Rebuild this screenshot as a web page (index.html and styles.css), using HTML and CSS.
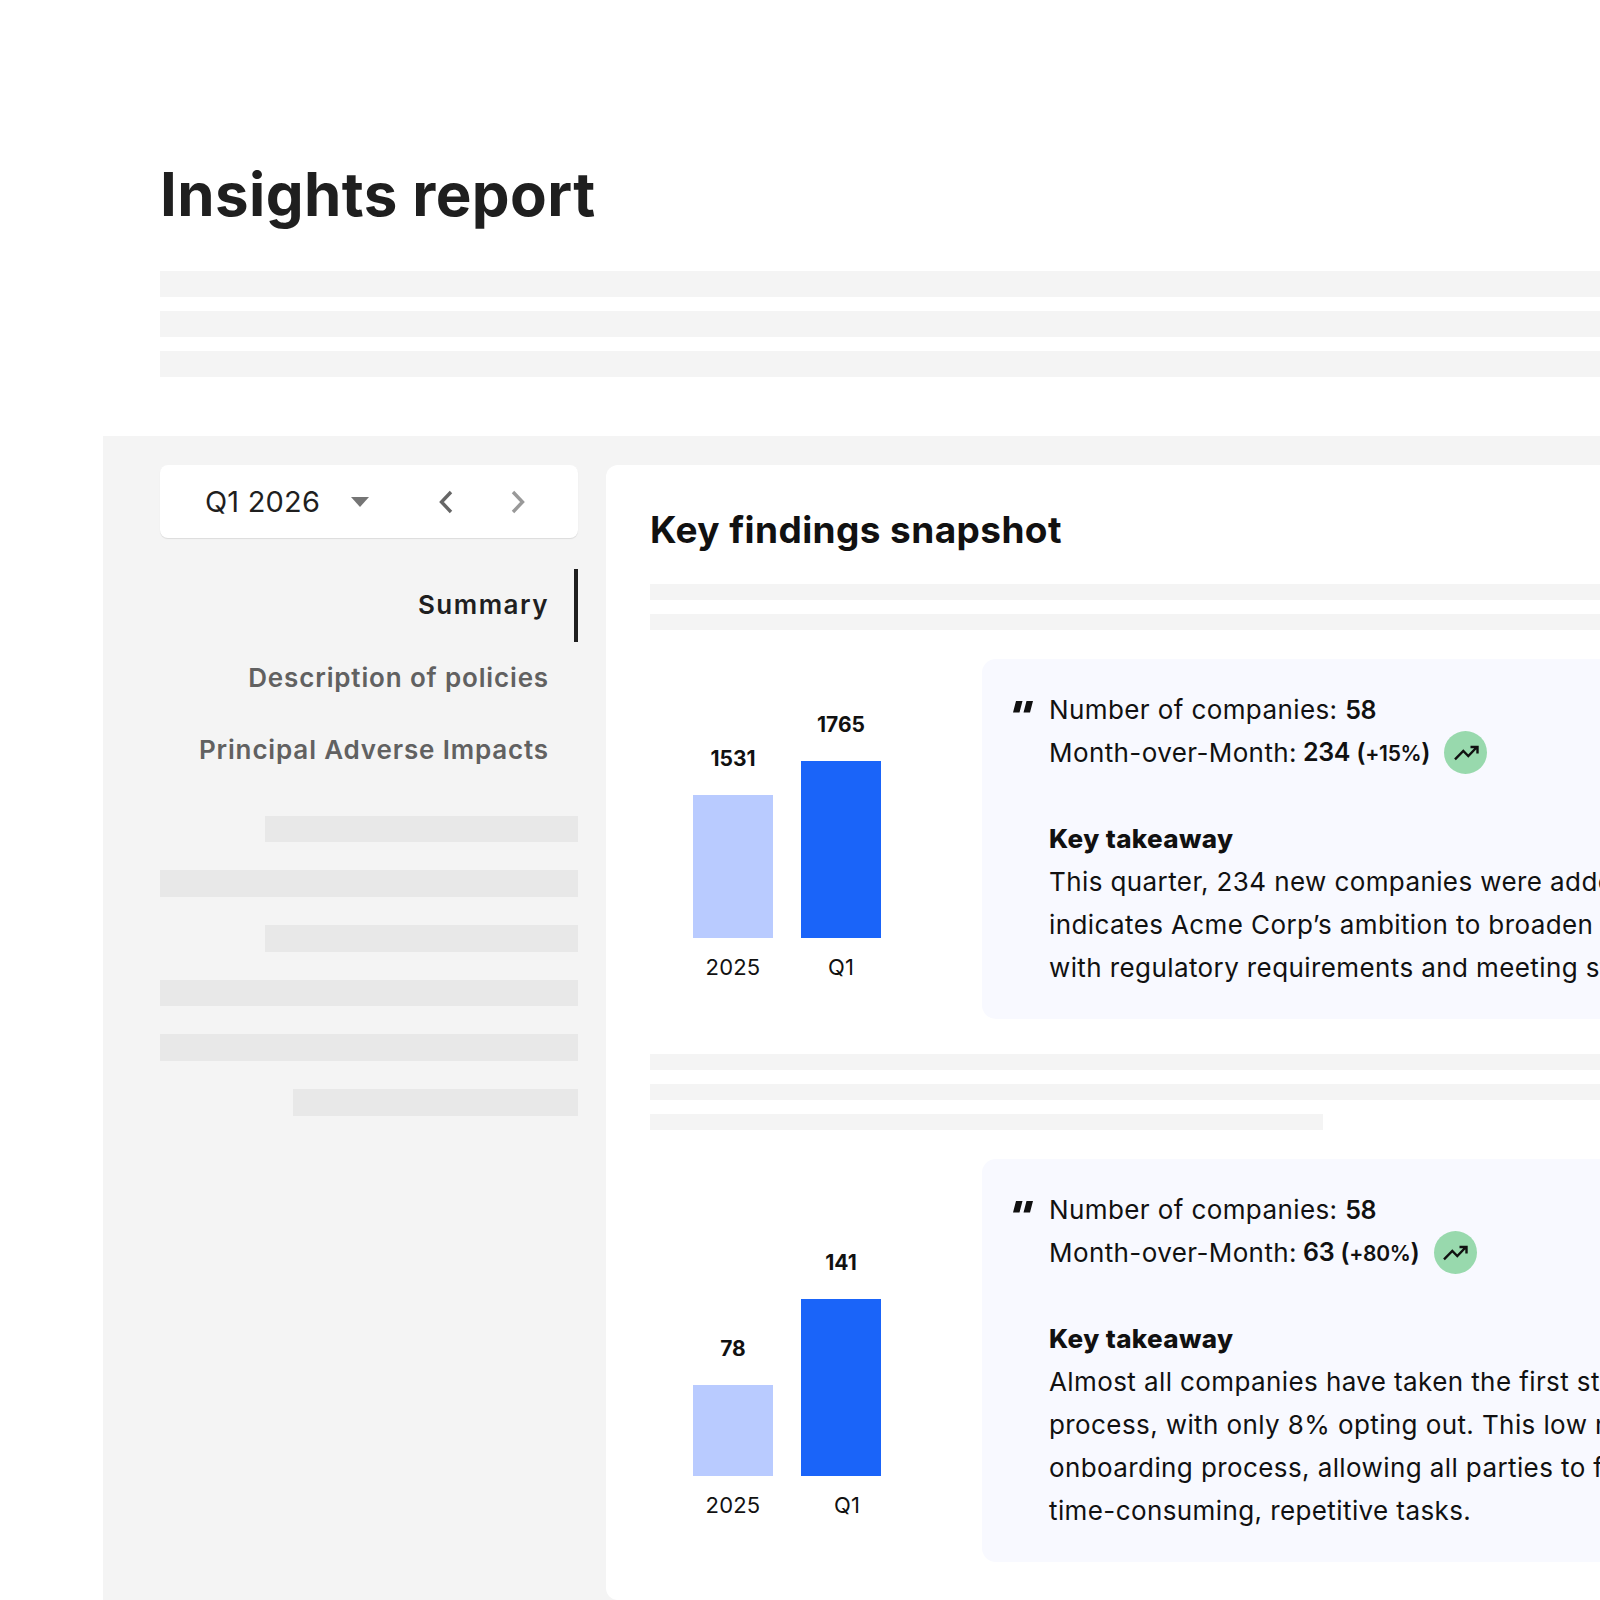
FILE: index.html
```html
<!DOCTYPE html>
<html lang="en">
<head>
    <meta charset="UTF-8">
    <meta name="viewport" content="width=device-width, initial-scale=1.0">
    <title>Insights report</title>
    <link rel="stylesheet" href="styles.css">
</head>
<body>
    <header class="report-header">
        <h1>Insights report</h1>
        <div class="line-stack">
            <div class="line"></div>
            <div class="line"></div>
            <div class="line"></div>
        </div>
    </header>

    <div class="workspace">
        <aside class="sidebar">
            <div class="period-picker">
                <span class="period-label">Q1 2026</span>
                <svg class="caret" width="18" height="10" viewBox="0 0 18 10"><path d="M0 0h18l-9 10z" fill="#757575"/></svg>
                <svg class="chevron chevron-prev" width="16" height="24" viewBox="0 0 16 24"><path d="M13 2 3.500 12l9.500 10" fill="none" stroke="#666" stroke-width="3.400"/></svg>
                <svg class="chevron chevron-next" width="16" height="24" viewBox="0 0 16 24"><path d="m3 2 9.500 10L3 22" fill="none" stroke="#999" stroke-width="3.400"/></svg>
            </div>
            <nav class="side-nav">
                <a class="side-link active">Summary</a>
                <a class="side-link">Description of policies</a>
                <a class="side-link">Principal Adverse Impacts</a>
            </nav>
            <div class="side-lines">
                <div class="side-line short"></div>
                <div class="side-line"></div>
                <div class="side-line short"></div>
                <div class="side-line"></div>
                <div class="side-line"></div>
                <div class="side-line shorter"></div>
            </div>
        </aside>

        <main class="main-card">
            <h2>Key findings snapshot</h2>
            <div class="thin-lines">
                <div class="thin-line"></div>
                <div class="thin-line"></div>
            </div>

            <section class="finding">
                <div class="chart">
                    <div class="bar-col">
                        <span class="bar-value">1531</span>
                        <div class="bar bar-light" style="height: 143px"></div>
                        <span class="bar-label">2025</span>
                    </div>
                    <div class="bar-col">
                        <span class="bar-value">1765</span>
                        <div class="bar bar-dark" style="height: 177px"></div>
                        <span class="bar-label">Q1</span>
                    </div>
                </div>
                <div class="quote-card">
                    <svg class="quote-mark" width="20" height="12" viewBox="0 0 20 12"><path d="M3 0h6.500L6.500 11.500H0zM13.500 0H20l-3 11.500h-6.500z" fill="#111"/></svg>
                    <p>Number of companies: <b>58</b></p>
                    <p class="trend-row">Month-over-Month: <b>234 (<small>+15%</small>)</b>
                        <span class="trend-badge">
                            <svg width="28" height="18" viewBox="0 0 28 18"><path d="M3 15.300 11.300 7l5 5L24 4M18.500 3h7v6.500" fill="none" stroke="#111" stroke-width="2.400"/></svg>
                        </span>
                    </p>
                    <h3>Key takeaway</h3>
                    <p>This quarter, 234 new companies were added to the portfolio, which</p>
                    <p>indicates Acme Corp’s ambition to broaden its reach in line</p>
                    <p>with regulatory requirements and meeting stakeholder needs.</p>
                </div>
            </section>

            <div class="thin-lines mid-lines">
                <div class="thin-line"></div>
                <div class="thin-line"></div>
                <div class="thin-line part"></div>
            </div>

            <section class="finding finding-tall">
                <div class="chart">
                    <div class="bar-col">
                        <span class="bar-value">78</span>
                        <div class="bar bar-light" style="height: 91px"></div>
                        <span class="bar-label">2025</span>
                    </div>
                    <div class="bar-col">
                        <span class="bar-value">141</span>
                        <div class="bar bar-dark" style="height: 177px"></div>
                        <span class="bar-label q1-shift">Q1</span>
                    </div>
                </div>
                <div class="quote-card">
                    <svg class="quote-mark" width="20" height="12" viewBox="0 0 20 12"><path d="M3 0h6.500L6.500 11.500H0zM13.500 0H20l-3 11.500h-6.500z" fill="#111"/></svg>
                    <p>Number of companies: <b>58</b></p>
                    <p class="trend-row">Month-over-Month: <b>63 (<small>+80%</small>)</b>
                        <span class="trend-badge">
                            <svg width="28" height="18" viewBox="0 0 28 18"><path d="M3 15.300 11.300 7l5 5L24 4M18.500 3h7v6.500" fill="none" stroke="#111" stroke-width="2.400"/></svg>
                        </span>
                    </p>
                    <h3>Key takeaway</h3>
                    <p>Almost all companies have taken the first step in the onboarding</p>
                    <p>process, with only 8% opting out. This low non-participation</p>
                    <p>onboarding process, allowing all parties to focus less on</p>
                    <p>time-consuming, repetitive tasks.</p>
                </div>
            </section>
        </main>
    </div>
</body>
</html>
```

FILE: styles.css
```css
html, body {
    margin: 0;
    padding: 0;
    height: 1600px;
    overflow: hidden;
    background-color: #fff;
}
body {
    font-family: Inter, "Noto Sans", sans-serif;
    color: #111;
}
.report-header {
    padding: 158px 0 0 160px;
}
.report-header h1 {
    margin: 0;
    height: 113px;
    font-size: 60px;
    line-height: 73px;
    letter-spacing: 0.4px;
    font-weight: 700;
    color: #1f1f1f;
}
.line-stack {
    display: flex;
    flex-direction: column;
    gap: 14px;
}
.line {
    height: 26px;
    background-color: #f4f4f4;
}
.workspace {
    display: flex;
    gap: 28px;
    margin: 59px 0 0 103px;
    padding: 29px 0 0 57px;
    height: 1135px;
    background-color: #f4f4f4;
}
.sidebar {
    flex: 0 0 418px;
}
.period-picker {
    display: flex;
    align-items: center;
    height: 73px;
    padding-left: 45px;
    box-sizing: border-box;
    background-color: #fff;
    border-radius: 8px;
    box-shadow: 0 1px 1px rgba(0, 0, 0, 0.1);
}
.period-label {
    width: 146px;
    font-size: 29px;
    letter-spacing: 0.2px;
    color: #1f1f1f;
}
.caret {
    margin-right: 69px;
}
.chevron-prev {
    margin-right: 56px;
}
.side-nav {
    display: flex;
    flex-direction: column;
    margin-top: 31px;
    text-align: right;
}
.side-link {
    height: 72.5px;
    line-height: 72.5px;
    padding-right: 29px;
    font-size: 26px;
    letter-spacing: 0.85px;
    font-weight: 600;
    color: #616161;
}
.side-link.active {
    color: #1f1f1f;
    letter-spacing: 1.5px;
    border-right: 4px solid #1f1f1f;
    padding-right: 25px;
}
.side-lines {
    display: flex;
    flex-direction: column;
    align-items: flex-end;
    gap: 28px;
    margin-top: 29px;
}
.side-line {
    width: 100%;
    height: 26.7px;
    background-color: #e8e8e8;
}
.side-line.short {
    width: 313px;
}
.side-line.shorter {
    width: 285px;
}
.main-card {
    flex: 0 0 1100px;
    box-sizing: border-box;
    padding: 0 0 0 44px;
    background-color: #fff;
    border-radius: 12px;
}
.main-card h2 {
    margin: 0;
    padding-top: 41px;
    height: 119px;
    box-sizing: border-box;
    font-size: 37px;
    line-height: 48px;
    letter-spacing: 0.4px;
    font-weight: 700;
}
.thin-lines {
    display: flex;
    flex-direction: column;
    gap: 14px;
}
.thin-line {
    height: 16px;
    background-color: #f4f4f4;
}
.thin-line.part {
    width: 673px;
}
.mid-lines {
    margin-top: 35px;
}
.finding {
    display: flex;
    align-items: flex-end;
    margin-top: 29px;
}
.chart {
    display: flex;
    flex: 0 0 332px;
    box-sizing: border-box;
    align-items: flex-end;
    gap: 28px;
    padding: 0 0 37px 43px;
}
.finding-tall .chart {
    padding-bottom: 42px;
}
.bar-col {
    display: flex;
    flex-direction: column;
    align-items: center;
    width: 80px;
}
.bar {
    width: 80px;
}
.bar-light {
    background-color: #b9cbff;
}
.bar-dark {
    background-color: #1a64f9;
}
.bar-value {
    margin-bottom: 22px;
    font-size: 21px;
    line-height: 29px;
    font-weight: 700;
}
.bar-label {
    margin-top: 15px;
    font-size: 22px;
    letter-spacing: 0.2px;
    line-height: 29px;
}
.q1-shift {
    margin-left: 12px;
}
.quote-card {
    position: relative;
    flex: 1;
    padding: 29px 0 30px 67px;
    background-color: #f8f9ff;
    border-radius: 14px 0 0 14px;
    font-size: 26px;
    letter-spacing: 0.4px;
    line-height: 43px;
    white-space: nowrap;
    overflow: hidden;
}
.quote-card p {
    margin: 0;
}
.quote-card b {
    font-size: 25px;
    line-height: 1;
    letter-spacing: -0.3px;
    font-weight: 600;
}
.quote-card small {
    font-size: 21px;
    line-height: 1;
}
.quote-card h3 {
    margin: 43px 0 0;
    font-size: 26px;
    line-height: 43px;
    font-weight: 800;
}
.quote-mark {
    position: absolute;
    left: 31px;
    top: 42px;
}
.trend-row {
    display: flex;
    align-items: center;
    height: 43px;
    gap: 6px;
}
.trend-badge {
    display: inline-flex;
    align-items: center;
    justify-content: center;
    width: 43px;
    height: 43px;
    margin-left: 8px;
    border-radius: 50%;
    background-color: #98d9ad;
}
```
